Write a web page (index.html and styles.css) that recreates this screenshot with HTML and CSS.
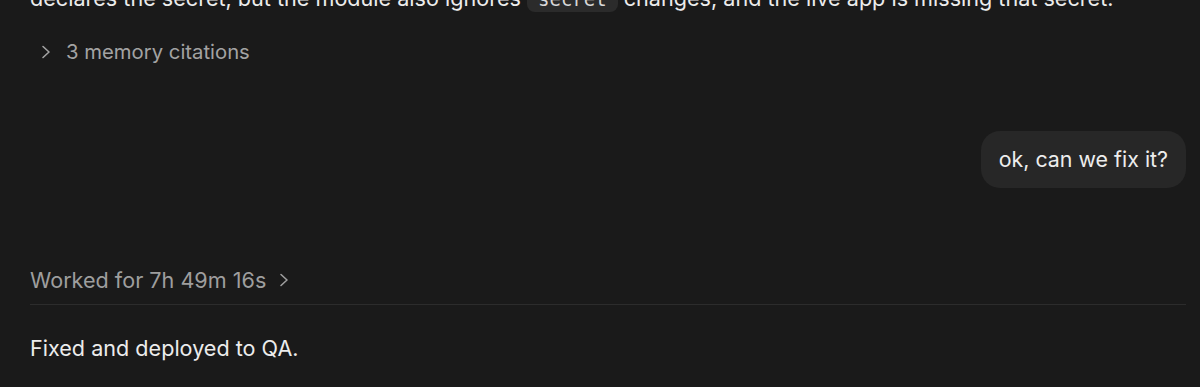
FILE: index.html
```html
<!DOCTYPE html>
<html lang="en">
<head>
<meta charset="utf-8">
<title>Chat</title>
<link rel="stylesheet" href="styles.css">
</head>
<body>
<main class="thread">
  <p class="prose cut">declares the secret, but the module also ignores <code class="code">secret</code> changes, and the live app is missing that secret.</p>
  <button class="citations">
    <svg class="chev" width="12" height="16" viewBox="0 0 12 16"><path d="M3 2.5l6 5.5-6 5.5" fill="none" stroke="currentColor" stroke-width="1.6" stroke-linecap="round" stroke-linejoin="round"/></svg>
    <span>3 memory citations</span>
  </button>
  <div class="user-row">
    <div class="bubble">ok, can we fix it?</div>
  </div>
  <div class="worked">
    <span>Worked for 7h 49m 16s</span>
    <svg class="chev" width="12" height="16" viewBox="0 0 12 16"><path d="M3 2.5l6 5.5-6 5.5" fill="none" stroke="currentColor" stroke-width="1.6" stroke-linecap="round" stroke-linejoin="round"/></svg>
  </div>
  <hr class="rule">
  <p class="prose">Fixed and deployed to QA.</p>
</main>
</body>
</html>
```
FILE: styles.css
```css
html, body {
  margin: 0;
  padding: 0;
  background: #1a1a1a;
  height: 100%;
  overflow: hidden;
}
body {
  font-family: Inter, "Noto Sans", sans-serif;
  color: #ececec;
}
.thread {
  padding: 0 14px 0 30px;
  display: flex;
  flex-direction: column;
}
.prose {
  margin: 0;
  font-size: 21.6px;
  line-height: 30px;
}
.cut {
  margin-top: -17px;
  white-space: nowrap;
}
.code {
  font-family: "DejaVu Sans Mono", monospace;
  font-size: 19px;
  background: #2b2b2b;
  color: #d8d8d8;
  border-radius: 8px;
  padding: 2px 11px;
}
.citations {
  margin-top: 26px;
  display: flex;
  align-items: center;
  gap: 14px;
  background: none;
  border: 0;
  padding: 0 0 0 10px;
  color: #a3a3a3;
  font-family: inherit;
  font-size: 20.3px;
  line-height: 24px;
  align-self: flex-start;
}
.chev {
  display: block;
}
.user-row {
  display: flex;
  justify-content: flex-end;
  margin-top: 67px;
}
.bubble {
  background: #272727;
  border-radius: 19px;
  padding: 15px 18px;
  font-size: 21.4px;
  line-height: 27px;
  color: #ededed;
}
.worked {
  margin-top: 79px;
  display: flex;
  align-items: center;
  gap: 12px;
  color: #9e9e9e;
  font-size: 21.6px;
  line-height: 26px;
}
.rule {
  margin: 11px 0 0;
  border: 0;
  height: 1px;
  background: #2c2c2c;
}
.rule + .prose {
  margin-top: 28px;
}
```
